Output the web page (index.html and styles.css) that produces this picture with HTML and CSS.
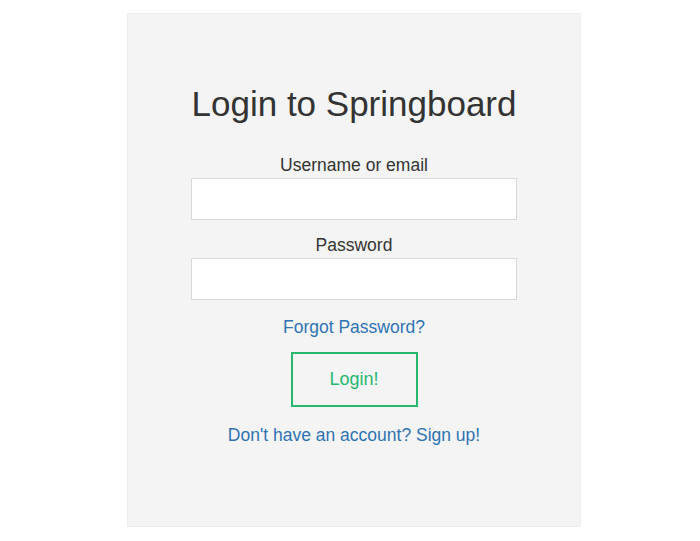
FILE: index.html
```html
<!DOCTYPE html>
<html>
<head>
<meta charset="utf-8">
<link rel="stylesheet" href="styles.css">
</head>
<body>
<div class="panel">
  <h1 class="title">Login to Springboard</h1>
  <form class="form">
    <label class="label" for="user">Username or email</label>
    <input class="input" id="user" type="text">
    <label class="label label-pw" for="pw">Password</label>
    <input class="input" id="pw" type="password">
    <a class="link forgot" href="#">Forgot Password?</a>
    <button class="btn" type="button">Login!</button>
    <a class="link signup" href="#">Don't have an account? Sign up!</a>
  </form>
</div>
</body>
</html>
```

FILE: styles.css
```css
html, body {
  margin: 0;
  padding: 0;
  background: #ffffff;
}
body {
  font-family: "Liberation Sans", Arial, sans-serif;
  color: #333333;
}
.panel {
  box-sizing: border-box;
  margin: 13px 0 0 127px;
  width: 454px;
  height: 514px;
  background: #f4f4f4;
  border: 1px solid #ededed;
  display: flex;
  flex-direction: column;
  align-items: center;
  padding-top: 66px;
}
.title {
  margin: 0;
  font-weight: normal;
  font-size: 35px;
  line-height: 48px;
  color: #333333;
}
.form {
  display: flex;
  flex-direction: column;
  align-items: center;
  margin-top: 26px;
}
.label {
  font-size: 17.5px;
  line-height: 22px;
  color: #333333;
  margin-bottom: 2px;
}
.label-pw {
  margin-top: 14px;
}
.input {
  box-sizing: border-box;
  width: 326px;
  height: 42px;
  background: #ffffff;
  border: 1px solid #d9d9d9;
  margin: 0;
  padding: 0 10px;
  font-size: 16px;
  outline: none;
}
.link {
  color: #2f73b3;
  text-decoration: none;
  font-size: 17.5px;
  line-height: 22px;
}
.forgot {
  margin-top: 16px;
}
.btn {
  box-sizing: border-box;
  margin-top: 14px;
  width: 127px;
  height: 55px;
  background: transparent;
  border: 2px solid #27b86e;
  color: #27b86e;
  font-family: "Liberation Sans", Arial, sans-serif;
  font-size: 18px;
  padding: 0;
}
.signup {
  margin-top: 17px;
}
```
